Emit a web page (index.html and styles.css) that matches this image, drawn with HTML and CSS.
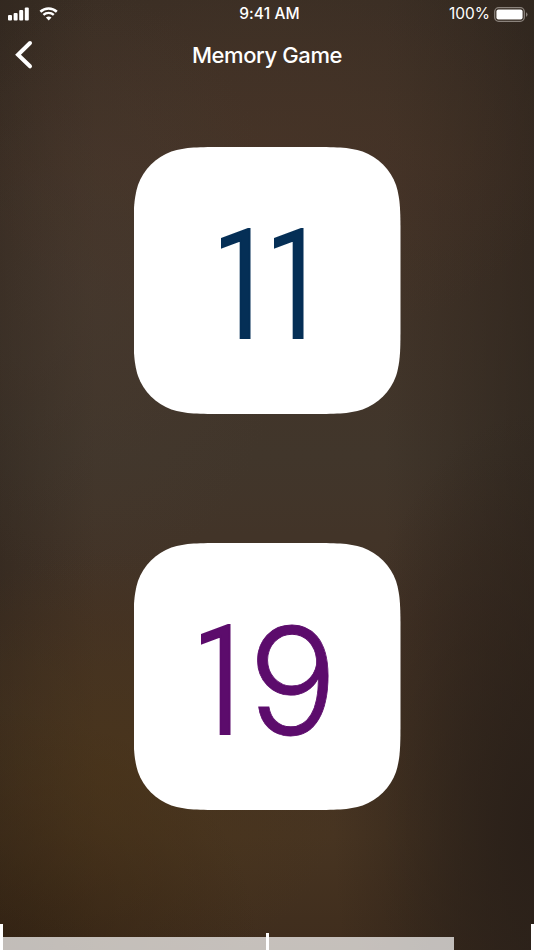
FILE: index.html
```
<!DOCTYPE html>
<html lang="en">
<head>
  <meta charset="UTF-8" />
  <title>Memory Game</title>
  <link rel="stylesheet" href="styles.css">
</head>
<body>
  <div class="status-bar">
    <div class="signal">
      <svg width="21" height="14" viewBox="0 0 21 14" fill="#fff">
        <rect x="0" y="8" width="4" height="5.5" rx="1" />
        <rect x="5.6" y="6" width="4" height="7.5" rx="1" />
        <rect x="11.2" y="3.1" width="4" height="10.4" rx="1" />
        <rect x="16.8" y="0.4" width="4" height="13.1" rx="1" />
      </svg>
      <svg width="20" height="14" viewBox="0 0 20 14" fill="none" stroke="#fff">
        <path d="M1.4 4.7a12.2 12.2 0 0 1 16.4 0" stroke-width="2.6" />
        <path d="M4.4 7.9a7.6 7.6 0 0 1 10.4 0" stroke-width="2.4" />
        <path d="M6.9 10.5a4.5 4.5 0 0 1 5.6 0L9.7 13.5z" fill="#fff" stroke="none" />
      </svg>
    </div>
    <div class="time">9:41 AM</div>
    <div class="battery">
      <span>100%</span>
      <svg width="34" height="15" viewBox="0 0 34 15">
        <rect x="0.7" y="0.7" width="29.6" height="13.6" rx="4" fill="none" stroke="#8b837c" stroke-width="1.3" />
        <rect x="2.4" y="2.4" width="26.2" height="10.2" rx="2" fill="#fff" />
        <path d="M32 5.2a2.5 2.5 0 0 1 0 4.6z" fill="#8b837c" />
      </svg>
    </div>
  </div>

  <header>
    <svg class="back" width="20" height="30" viewBox="0 0 20 30">
      <path d="M16 3L4 14.8L16 26.3" fill="none" stroke="#fff" stroke-width="4" stroke-linecap="round" stroke-linejoin="miter" />
    </svg>
    <h1>Memory Game</h1>
  </header>

  <main class="board">
    <div class="card blue">
      <span class="one">1</span><span class="one">1</span>
    </div>
    <div class="card purple">
      <span class="one">1</span><span class="nine">9</span>
    </div>
  </main>

  <footer class="timer">
    <div class="progress"></div>
    <div class="tick left"></div>
    <div class="tick middle"></div>
    <div class="tick right"></div>
  </footer>
</body>
</html>
```
FILE: styles.css
```
* {
  box-sizing: border-box;
}
body {
  margin: 0;
  height: 950px;
  overflow: hidden;
  display: flex;
  flex-direction: column;
  font-family: Inter, "Liberation Sans", sans-serif;
  color: #fff;
  background:
    radial-gradient(ellipse 240px 220px at 110px 770px, rgba(75, 53, 24, 0.6), rgba(75, 53, 24, 0)),
    radial-gradient(ellipse 200px 300px at 90px 290px, rgba(71, 59, 49, 0.5), rgba(71, 59, 49, 0)),
    radial-gradient(ellipse 300px 210px at 270px 140px, rgba(72, 53, 40, 0.6), rgba(72, 53, 40, 0)),
    radial-gradient(ellipse 200px 420px at 534px 830px, #2a2019, rgba(42, 32, 25, 0)),
    radial-gradient(ellipse 260px 240px at 0 950px, rgba(48, 32, 17, 0.8), rgba(48, 32, 17, 0)),
    linear-gradient(90deg, rgba(42, 34, 27, 0.45), rgba(42, 34, 27, 0) 18%, rgba(42, 34, 27, 0) 72%, rgba(42, 34, 27, 0.6)),
    linear-gradient(#3a2e24, #433226 18%, #41362b 48%, #433225 65%, #473421 88%, #3f2d1d);
}
.status-bar {
  display: grid;
  grid-template-columns: 1fr auto 1fr;
  height: 28px;
  padding: 0 6px 0 8px;
  align-items: center;
  font-size: 15.5px;
  line-height: 28px;
}
.signal {
  display: flex;
  gap: 10px;
}
.time {
  font-weight: 500;
  letter-spacing: 0.1px;
  padding-left: 3px;
}
.battery {
  display: flex;
  justify-content: flex-end;
  align-items: center;
  gap: 4px;
}
header {
  display: grid;
  grid-template-columns: 60px 1fr 60px;
  align-items: center;
  height: 54px;
}
.back {
  margin-left: 14px;
}
h1 {
  margin: 0;
  padding-bottom: 1px;
  text-align: center;
  font-size: 22px;
  font-weight: 500;
  letter-spacing: -0.4px;
}
.board {
  display: flex;
  flex-direction: column;
  align-items: center;
  gap: 129px;
  padding-top: 65px;
}
.card {
  width: 267px;
  height: 267px;
  display: flex;
  background: #fff;
  clip-path: path("M91.7 0H175.3C201.7 0 214.9 0 229.1 4.5C244.6 10.1 256.9 22.4 262.5 37.9C267 52.1 267 65.3 267 91.7V175.3C267 201.7 267 214.9 262.5 229.1C256.9 244.6 244.6 256.9 229.1 262.5C214.9 267 201.7 267 175.3 267H91.7C65.3 267 52.1 267 37.9 262.5C22.4 256.9 10.1 244.6 4.5 229.1C0 214.9 0 201.7 0 175.3V91.7C0 65.3 0 52.1 4.5 37.9C10.1 22.4 22.4 10.1 37.9 4.5C52.1 0 65.3 0 91.7 0Z");
  font-family: Roboto, sans-serif;
  font-size: 152px;
  line-height: 278px;
}
.blue {
  padding-left: 87px;
  color: #052f56;
}
.purple {
  padding-left: 67px;
  color: #5c0c6c;
}
/* short flag: the left end of the digit is cut off */
.one {
  width: 40px;
  margin-right: 13px;
  overflow: hidden;
  text-indent: -22.5px;
  font-weight: 300;
  -webkit-text-stroke: 2px;
}
.nine {
  font-family: Inter, sans-serif;
  font-size: 149px;
  line-height: 276px;
  font-weight: 300;
  margin-left: -5.5px;
  -webkit-text-stroke: 0.8px;
}
.timer {
  position: relative;
  display: flex;
  align-items: flex-end;
  height: 26px;
  margin-top: auto;
  padding-left: 3px;
}
.progress {
  width: 451px;
  height: 13.5px;
  background: rgba(255, 255, 255, 0.7);
}
/* marks on top of the timer */
.tick {
  position: absolute;
  bottom: 0;
  width: 3px;
  height: 26px;
  background: #fff;
}
.left {
  left: 0;
}
.middle {
  left: 265.5px;
  height: 17px;
}
.right {
  right: 0;
}
```
